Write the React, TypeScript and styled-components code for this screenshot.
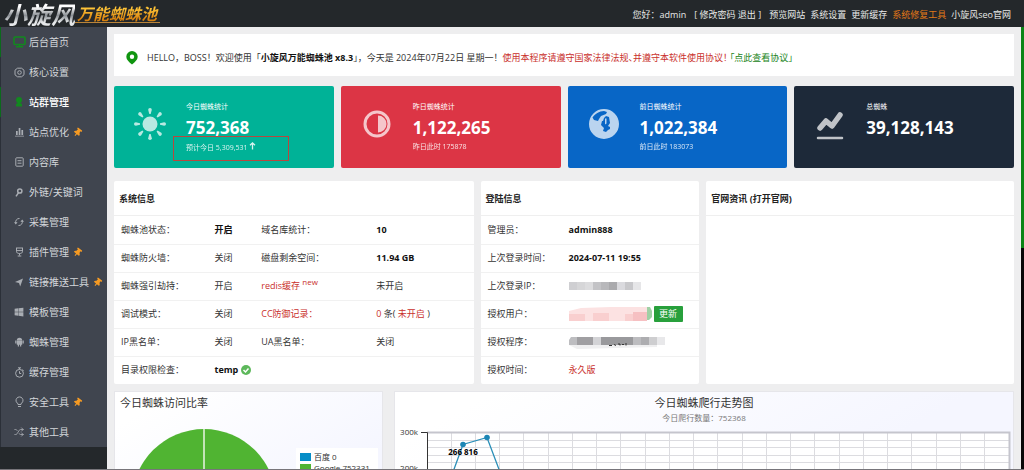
import React from "react";
import styled, { createGlobalStyle, css } from "styled-components";
import { FaThumbtack, FaWindows } from "react-icons/fa";
import { Shuffle } from "lucide-react";

const Global = createGlobalStyle`
  * { box-sizing: border-box; }
  body {
    margin: 0;
    background: #eeeeef;
    color: #333;
    font: 9px/14px "Open Sans", "Noto Sans CJK SC", sans-serif;
  }
  a { color: inherit; text-decoration: none; }
  h1, h2, p, ul { margin: 0; padding: 0; font-size: inherit; }
  ul { list-style: none; }
`;

const Page = styled.div`
  display: flex;
  flex-direction: column;
  height: 100vh;
  overflow: hidden;
  border-bottom: 1px solid #77757a;
`;

const Header = styled.header`
  display: flex;
  flex: none;
  justify-content: space-between;
  align-items: center;
  height: 27px;
  padding: 0 13px 0 3px;
  background: #24282b;
  color: #e8e8e8;
`;

const Logo = styled.h1`
  display: flex;
  align-items: center;
  font-family: "Noto Sans CJK SC", sans-serif;
  font-style: italic;
  font-weight: 700;
  white-space: nowrap;
`;

const LogoMain = styled.span`
  font-size: 24px;
  line-height: 28px;
  color: transparent;
  background: linear-gradient(#ffffff 25%, #8b9095 55%, #e6e8ea 80%);
  background-clip: text;
  -webkit-background-clip: text;
`;

const LogoSub = styled.span`
  padding: 0 3px 0 2px;
  border-bottom: 1px solid #b9843a;
  font-size: 16px;
  line-height: 18px;
  color: transparent;
  background: linear-gradient(#ffc437 25%, #d9820e 85%);
  background-clip: text;
  -webkit-background-clip: text;
`;

const TopNav = styled.nav`
  display: flex;
  gap: 5px;
  padding-top: 3px;
  white-space: nowrap;
`;

const TopLink = styled.a<{ $hot?: boolean }>`
  color: ${(p) => (p.$hot ? "#e07818" : "inherit")};
`;

const TopText = styled.span`
  margin-right: 3px;
`;

const Body = styled.div`
  display: flex;
  flex: 1;
  min-height: 0;
`;

const Sidebar = styled.aside`
  flex: none;
  width: 107px;
  background: #24282b;
`;

const Menu = styled.ul`
  background: #40454f;
`;

const MenuItem = styled.li<{ $marked?: boolean }>`
  border-left: 1px solid ${(p) => (p.$marked ? "#0b6a1c" : "#2b3038")};
`;

const MenuLink = styled.a<{ $active?: boolean }>`
  display: flex;
  align-items: center;
  height: 30px;
  padding-left: 11px;
  font-size: 10px;
  white-space: nowrap;
  color: ${(p) => (p.$active ? "#fff" : "#d3d6da")};
  font-weight: ${(p) => (p.$active ? 500 : 400)};
`;

const IconSlot = styled.span<{ $green?: boolean }>`
  display: flex;
  justify-content: center;
  width: 14px;
  margin-right: 3px;
  color: ${(p) => (p.$green ? "#12891f" : "#a9adb3")};
`;

const Pin = styled(FaThumbtack)`
  margin-left: 4px;
  color: #f59a23;
  transform: rotate(38deg);
`;

const Main = styled.main`
  flex: 1;
  min-width: 0;
  padding: 7px 7px 0;
  overflow: hidden;
`;

const Rail = styled.div`
  flex: none;
  width: 3px;
  background: #080808;
`;

const RailThumb = styled.div`
  height: 50%;
  background: #0b8414;
`;

const Notice = styled.section`
  display: flex;
  align-items: center;
  gap: 9px;
  height: 42px;
  margin-bottom: 10px;
  padding: 6px 12px 0;
  background: #fff;
  white-space: nowrap;
`;

const NoticeText = styled.p`
  b { color: #111; }
`;

const Terms = styled.span`
  font-feature-settings: "palt";
`;

const Red = styled.span`
  color: #c9302c;
`;

const Green = styled.a`
  color: #188318;
`;

const Stats = styled.section`
  display: grid;
  grid-template-columns: repeat(4, 1fr);
  gap: 7px;
  margin-bottom: 13px;
`;

const Stat = styled.article<{ $color: string }>`
  position: relative;
  display: flex;
  height: 82px;
  padding: 14px 20px 0;
  border-radius: 2px;
  background: ${(p) => p.$color};
  color: #fff;
`;

const StatIcon = styled.svg`
  flex: none;
  width: 32px;
  height: 32px;
  margin: 8px 20px 0 0;
  opacity: 0.72;
`;

const StatLabel = styled.p`
  font-size: 7px;
  line-height: 14px;
`;

const StatValue = styled.p`
  font-size: 17px;
  line-height: 28px;
  font-weight: 700;
`;

const StatNote = styled.p`
  font-size: 7px;
  line-height: 10px;
  opacity: 0.85;
`;

const Highlight = styled.span`
  position: absolute;
  top: 50px;
  left: 59px;
  width: 116px;
  height: 25px;
  border: 1px solid #b8483f;
`;

const Panels = styled.section`
  display: grid;
  grid-template-columns: 360fr 219fr 308fr;
  gap: 7px;
  margin-bottom: 7px;
`;

const Panel = styled.section`
  background: #fff;
  border-radius: 2px;
`;

const PanelTitle = styled.h2`
  height: 35px;
  padding: 11px 5px 0;
  border-bottom: 1px solid #efefef;
  font-weight: 700;
  color: #222;
`;

const Table = styled.table<{ $four?: boolean }>`
  width: 100%;
  table-layout: fixed;
  border-collapse: collapse;

  th, td {
    height: 28px;
    padding: 0 0 0 7px;
    text-align: left;
    font-weight: 400;
    white-space: nowrap;
  }
  tr + tr > * { border-top: 1px solid #f1f1f1; }
  b { color: #111; }
  sup { font-size: 8px; line-height: 0; }
  ${(p) =>
    p.$four
      ? css`
          tr:first-child > :nth-child(1) { width: 26%; }
          tr:first-child > :nth-child(2) { width: 13%; }
          tr:first-child > :nth-child(3) { width: 32%; }
        `
      : css`
          tr:first-child > :nth-child(1) { width: 37%; }
        `}
`;

const Inline = styled.div`
  display: flex;
  align-items: center;
  gap: 2px;
`;

const Update = styled.button`
  width: 29px;
  height: 16px;
  padding: 0;
  border: 0;
  border-radius: 1px;
  background: #28a03c;
  color: #fff;
  font: inherit;
`;

const Charts = styled.section`
  display: grid;
  grid-template-columns: 269fr 620fr;
  gap: 11px;
`;

const Chart = styled.figure`
  margin: 0;
  border: 1px solid #e6e6ea;
  background: linear-gradient(150deg, #fff 10%, #f5f6ff 60%);
  svg { display: block; width: 100%; }
`;

const stroke = { fill: "none", stroke: "currentColor", strokeWidth: 1 };

const icons = {
  home: (
    <svg width="13" height="12" viewBox="0 0 13 12" {...stroke}>
      <rect x="1" y="1" width="11" height="7.500" rx="1" strokeWidth="1.600" />
      <path d="M6.500 8.500v2M3 10.800h7" strokeWidth="1.400" />
    </svg>
  ),
  gear: (
    <svg width="11" height="11" viewBox="0 0 11 11" {...stroke}>
      <path d="M3.500 1.200h4l2.500 2v4.600l-2.500 2h-4L1 7.800V3.200z" />
      <circle cx="5.500" cy="5.500" r="1.800" />
    </svg>
  ),
  user: (
    <svg width="8" height="10" viewBox="0 0 8 10" fill="currentColor">
      <circle cx="4" cy="3" r="3" />
      <path d="M2.500 5h3v1.200L7 7v2.500H1V7l1.500-.8z" />
    </svg>
  ),
  bars: (
    <svg width="9" height="10" viewBox="0 0 9 10" fill="currentColor">
      <path d="M1 4h1.700v4H1zM3.700 1h1.700v7H3.700zM6.400 3h1.700v5H6.400zM0 8.700h9v.9H0z" />
    </svg>
  ),
  list: (
    <svg width="9" height="10" viewBox="0 0 9 10" {...stroke}>
      <rect x=".8" y=".8" width="7.400" height="8.400" rx=".8" />
      <path d="M2.500 3.700h4M2.500 6.200h4" />
    </svg>
  ),
  key: (
    <svg width="8" height="9" viewBox="0 0 8 9" {...stroke}>
      <circle cx="4.800" cy="3" r="2.100" strokeWidth="1.500" />
      <path d="M3.400 4.800L1 8.300" strokeWidth="1.500" />
    </svg>
  ),
  sync: (
    <svg width="10" height="10" viewBox="0 0 10 10" {...stroke}>
      <path d="M5.500 1.500A3.500 3.500 0 0 0 1.800 6M4.500 8.500A3.500 3.500 0 0 0 8.200 4" />
      <path d="M0 5.300h3.600L1.800 7.600zM10 4.700H6.400L8.200 2.400z" fill="currentColor" stroke="none" />
    </svg>
  ),
  plug: (
    <svg width="9" height="10" viewBox="0 0 9 10" {...stroke}>
      <path d="M1 1h7M1.500 1v3.300c0 1.500 1 2.200 3 2.200s3-.7 3-2.200V1M1.500 3.600h6M4.500 6.500v2M2.700 9h3.600" />
    </svg>
  ),
  send: (
    <svg width="8" height="9" viewBox="0 0 8 9" fill="currentColor">
      <path d="M8 .5L5.200 8.500 4 5 0 4z" />
    </svg>
  ),
  android: (
    <svg width="9" height="10" viewBox="0 0 9 10" fill="currentColor">
      <path d="M1.800 3.200a2.700 2.500 0 0 1 5.400 0zM1.800 3.600h5.400v4.200H1.800zM.2 3.600h1.200v3H.2zM7.600 3.600h1.200v3H7.600zM2.800 7.800H4v1.800H2.800zM5 7.800h1.200v1.800H5z" />
    </svg>
  ),
  timer: (
    <svg width="11" height="11" viewBox="0 0 11 11" {...stroke}>
      <circle cx="5.500" cy="6.300" r="3.900" />
      <path d="M4 .8h3M5.500 1v1.400M5.500 4.200v2.300h1.700M8.600 2.600l1 1" />
    </svg>
  ),
  bulb: (
    <svg width="9" height="12" viewBox="0 0 9 12" {...stroke}>
      <path d="M3 8.500V7.600A3.500 3.500 0 1 1 6 7.600v.9zM3 10.500h3" />
    </svg>
  ),
};

const menu: { label: string; icon: React.ReactNode; pin?: boolean; marked?: boolean; green?: boolean; active?: boolean }[] = [
  { label: "后台首页", icon: icons.home, marked: true, green: true },
  { label: "核心设置", icon: icons.gear },
  { label: "站群管理", icon: icons.user, marked: true, green: true, active: true },
  { label: "站点优化", icon: icons.bars, pin: true },
  { label: "内容库", icon: icons.list },
  { label: "外链/关键词", icon: icons.key },
  { label: "采集管理", icon: icons.sync },
  { label: "插件管理", icon: icons.plug, pin: true },
  { label: "链接推送工具", icon: icons.send, pin: true },
  { label: "模板管理", icon: <FaWindows size={10} /> },
  { label: "蜘蛛管理", icon: icons.android },
  { label: "缓存管理", icon: icons.timer },
  { label: "安全工具", icon: icons.bulb, pin: true },
  { label: "其他工具", icon: <Shuffle size={10} /> },
];

const sun = (
  <>
    <circle cx="16" cy="16" r="7.500" />
    {[0, 45, 90, 135, 180, 225, 270, 315].map((a) => (
      <path key={a} transform={`rotate(${a} 16 16)`} d="M14.200 1.800a1.800 1.800 0 0 1 3.600 0L16.700 6h-1.400z" />
    ))}
  </>
);

const contrast = (
  <>
    <circle cx="16" cy="16" r="12" fill="none" stroke="currentColor" strokeWidth="3" />
    <path d="M17 7.500a8.500 8.500 0 0 1 0 17z" />
  </>
);

const globe = (
  <path
    fillRule="evenodd"
    d="M16 1a15 15 0 1 1 0 30a15 15 0 0 1 0-30zM4.500 9.500C7 6 11 3 16 3l3 1-1 2-5 2-2 3-1 2-4-1zM14 13l-1 4 3 3-1 3 3 1 2-2 2-1v-2l-2-1 2-3-1-6-3-1-2 2-1 3zM17 10.500l1.500 0v5l-1.500 1z"
  />
);

const trend = (
  <g fill="none" stroke="currentColor" strokeLinecap="round" strokeLinejoin="round">
    <path d="M6 20l6-7 6 5 8-11" strokeWidth="5.500" />
    <path d="M4 30h24" strokeWidth="2.500" />
  </g>
);

const stats = [
  { color: "#00b297", label: "今日蜘蛛统计", value: "752,368", note: "预计今日 5,309,531", art: sun, up: true },
  { color: "#dc3545", label: "昨日蜘蛛统计", value: "1,122,265", note: "昨日此时 175878", art: contrast },
  { color: "#0866c6", label: "前日蜘蛛统计", value: "1,022,384", note: "前日此时 183073", art: globe },
  { color: "#1d2939", label: "总蜘蛛", value: "39,128,143", note: "", art: trend },
];

function Mosaic({ colors, height, step }: { colors: string[]; height: number; step: number }) {
  return (
    <svg width={colors.length * step} height={height} aria-hidden="true">
      {colors.map((c, i) => (
        <rect key={i} x={i * step} width={step} height={height} fill={c} />
      ))}
    </svg>
  );
}

const verticals = Array.from({ length: 23 }, (_, i) => 56 + i * 24.25);
const horizontals = [48, 55, 63, 70, 77, 84];

export default function App() {
  return (
    <>
      <Global />
      <Page>
        <Header>
          <Logo>
            <LogoMain>小旋风</LogoMain>
            <LogoSub>万能蜘蛛池</LogoSub>
          </Logo>
          <TopNav>
            <TopText>您好：admin</TopText>
            <TopText>
              [ <TopLink href="#">修改密码</TopLink> <TopLink href="#">退出</TopLink> ]
            </TopText>
            <TopLink href="#">预览网站</TopLink>
            <TopLink href="#">系统设置</TopLink>
            <TopLink href="#">更新缓存</TopLink>
            <TopLink href="#" $hot>系统修复工具</TopLink>
            <TopLink href="#">小旋风seo官网</TopLink>
          </TopNav>
        </Header>
        <Body>
          <Sidebar>
            <Menu>
              {menu.map((m) => (
                <MenuItem key={m.label} $marked={m.marked}>
                  <MenuLink href="#" $active={m.active}>
                    <IconSlot $green={m.green}>{m.icon}</IconSlot>
                    {m.label}
                    {m.pin && <Pin size={9} />}
                  </MenuLink>
                </MenuItem>
              ))}
            </Menu>
          </Sidebar>
          <Main>
            <Notice>
              <svg width="12" height="14" viewBox="0 0 12 14" fill="#109510">
                <path fillRule="evenodd" d="M6 0a5.700 5.700 0 0 1 5.700 5.700C11.700 8.700 9 11 6 13.600 3 11 .3 8.700.3 5.700A5.700 5.700 0 0 1 6 0zM6 3.500a2.200 2.200 0 1 0 0 4.400a2.200 2.200 0 0 0 0-4.400z" />
              </svg>
              <NoticeText>
                HELLO，BOSS！欢迎使用「<b>小旋风万能蜘蛛池 x8.3</b>」，今天是 2024年07月22日 星期一！
                <Terms>
                  <Red>使用本程序请遵守国家法律法规、并遵守本软件使用协议！</Red>{" "}
                  <Green href="#">「点此查看协议」</Green>
                </Terms>
              </NoticeText>
            </Notice>
            <Stats>
              {stats.map((s) => (
                <Stat key={s.label} $color={s.color}>
                  <StatIcon viewBox="0 0 32 32" fill="currentColor">{s.art}</StatIcon>
                  <div>
                    <StatLabel>{s.label}</StatLabel>
                    <StatValue>{s.value}</StatValue>
                    <StatNote>
                      {s.note}{" "}
                      {s.up && (
                        <svg width="7" height="8" viewBox="0 0 7 8" fill="none" stroke="#fff" strokeWidth="1.300">
                          <path d="M3.500 7.500V1M1 3.300L3.500 1 6 3.300" />
                        </svg>
                      )}
                    </StatNote>
                  </div>
                  {s.up && <Highlight />}
                </Stat>
              ))}
            </Stats>
            <Panels>
              <Panel>
                <PanelTitle>系统信息</PanelTitle>
                <Table $four>
                  <tbody>
                    <tr><th>蜘蛛池状态：</th><td><b>开启</b></td><th>域名库统计：</th><td><b>10</b></td></tr>
                    <tr><th>蜘蛛防火墙：</th><td>关闭</td><th>磁盘剩余空间：</th><td><b>11.94 GB</b></td></tr>
                    <tr><th>蜘蛛强引劫持：</th><td>开启</td><th><Red>redis缓存 <sup>new</sup></Red></th><td>未开启</td></tr>
                    <tr><th>调试模式：</th><td>关闭</td><th><Red>CC防御记录：</Red></th><td><Red>0</Red> 条( <Red>未开启</Red> )</td></tr>
                    <tr><th>IP黑名单：</th><td>关闭</td><th>UA黑名单：</th><td>关闭</td></tr>
                    <tr>
                      <th>目录权限检查：</th>
                      <td colSpan={3}>
                        <Inline>
                          <b>temp</b>
                          <svg width="12" height="12" viewBox="0 0 12 12">
                            <circle cx="6" cy="6" r="5" fill="#5db85b" />
                            <path d="M3.500 6l2 2 3-3.500" fill="none" stroke="#fff" strokeWidth="1.500" />
                          </svg>
                        </Inline>
                      </td>
                    </tr>
                  </tbody>
                </Table>
              </Panel>
              <Panel>
                <PanelTitle>登陆信息</PanelTitle>
                <Table>
                  <tbody>
                    <tr><th>管理员：</th><td><b>admin888</b></td></tr>
                    <tr><th>上次登录时间：</th><td><b>2024-07-11 19:55</b></td></tr>
                    <tr>
                      <th>上次登录IP：</th>
                      <td><Inline><Mosaic step={8} height={8} colors={["#cfcfd2", "#d6d6d8", "#dcdcde", "#c3c3c6", "#b8b8bb", "#aaaaad", "#dadade", "#c8c8cb", "#e6e6e8"]} /></Inline></td>
                    </tr>
                    <tr>
                      <th>授权用户：</th>
                      <td>
                        <Inline>
                          <svg width="83" height="16" viewBox="0 0 83 16">
                            <path d="M0 5l12-3 30-1h36v14H0z" fill="#fce2e2" />
                            <path d="M0 8h16v7H0zM24 7h16v8H24zM56 8h14v7H56z" fill="#f9cfcf" />
                            <path d="M64 6h14v9H64z" fill="#f6c0c2" />
                            <path d="M78 1h3l2 4v6l-3 3h-2z" fill="#9fd0a4" />
                          </svg>
                          <Update type="button">更新</Update>
                        </Inline>
                      </td>
                    </tr>
                    <tr>
                      <th>授权程序：</th>
                      <td>
                        <Inline>
                          <svg width="96" height="14" viewBox="0 0 96 14">
                            <path d="M0 10h88v2L8 14z" fill="#efeff0" />
                            <path d="M2 2h6v8H0V5z" fill="#bdbdc0" />
                            <rect x="8" y="2" width="16" height="8" fill="#a09fa2" />
                            <rect x="24" y="2" width="8" height="8" fill="#d3d3d6" />
                            <rect x="32" y="2" width="32" height="8" fill="#99999c" />
                            <rect x="64" y="2" width="8" height="8" fill="#bcbcbf" />
                            <rect x="72" y="2" width="8" height="8" fill="#adadb0" />
                            <rect x="80" y="2" width="8" height="8" fill="#ceced0" />
                            <rect x="88" y="2" width="8" height="8" fill="#e8e8ea" />
                            <path d="M40 10.500h3M45 9.500l2 1M49 9h2v1.500M53 9.500h2M57 10.500V8" stroke="#333" fill="none" />
                          </svg>
                        </Inline>
                      </td>
                    </tr>
                    <tr><th>授权时间：</th><td><Red>永久版</Red></td></tr>
                  </tbody>
                </Table>
              </Panel>
              <Panel>
                <PanelTitle>官网资讯 (<a href="#">打开官网</a>)</PanelTitle>
              </Panel>
            </Panels>
            <Charts>
              <Chart>
                <svg viewBox="0 0 267 200" fontSize="8" fill="#333">
                  <text x="5" y="15" fontSize="11">今日蜘蛛访问比率</text>
                  <circle cx="89" cy="109" r="72" fill="#50b432" />
                  <path d="M89 37v72" stroke="#e8f4e4" strokeWidth="1.500" />
                  <rect x="181" y="56" width="82" height="60" fill="#fff" />
                  <rect x="185" y="61" width="11" height="8" fill="#058dc7" />
                  <text x="199" y="68">百度 0</text>
                  <rect x="185" y="72" width="11" height="8" fill="#50b432" />
                  <text x="199" y="79">Google 752331</text>
                </svg>
              </Chart>
              <Chart>
                <svg viewBox="0 0 618 200" fontSize="8" fill="#333">
                  <text x="309" y="15" fontSize="11" textAnchor="middle">今日蜘蛛爬行走势图</text>
                  <text x="309" y="29" fill="#777" textAnchor="middle">今日爬行数量：752368</text>
                  <rect x="32" y="40" width="582" height="160" fill="#fff" />
                  <g stroke="#dcdce0" shapeRendering="crispEdges">
                    {verticals.map((x) => <path key={x} d={`M${x} 41v160`} />)}
                    {horizontals.map((y) => <path key={y} d={`M32 ${y}.5h582`} />)}
                  </g>
                  <path d="M32 40.500h582.500V200" fill="none" stroke="#c5c5cd" strokeWidth="2" />
                  <path d="M26 40.500h6.500V200" fill="none" stroke="#333" />
                  <text x="23" y="43" textAnchor="end">300k</text>
                  <text x="23" y="79" textAnchor="end">200k</text>
                  <path d="M58 80L68 52.500 92 45.500 105 80" fill="none" stroke="#2b8fb8" strokeWidth="1.300" />
                  <circle cx="68" cy="52.500" r="2.800" fill="#1c86b5" />
                  <circle cx="92" cy="45.500" r="2.800" fill="#1c86b5" />
                  <text x="68" y="63" textAnchor="middle" fontWeight="700" fill="#000">266 816</text>
                </svg>
              </Chart>
            </Charts>
          </Main>
          <Rail><RailThumb /></Rail>
        </Body>
      </Page>
    </>
  );
}
